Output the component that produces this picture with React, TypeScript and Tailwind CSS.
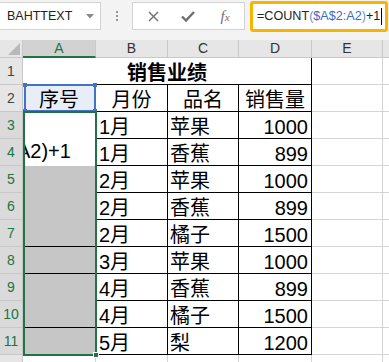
const DATA = [
  { m: "1月", p: "苹果", q: "1000" },
  { m: "1月", p: "香蕉", q: "899" },
  { m: "2月", p: "苹果", q: "1000" },
  { m: "2月", p: "香蕉", q: "899" },
  { m: "2月", p: "橘子", q: "1500" },
  { m: "3月", p: "苹果", q: "1000" },
  { m: "4月", p: "香蕉", q: "899" },
  { m: "4月", p: "橘子", q: "1500" },
  { m: "5月", p: "梨", q: "1200" },
];

// rows whose A cell has a black bottom line (A7, A8, A10)
const A_LINE = [7, 8, 10];

function RowHead({ n, sel }: { n: number; sel?: boolean }) {
  return (
    <div
      className={
        sel
          ? "flex items-center justify-center border-r border-b border-[#c8c8c8] bg-[#dadada] text-[14px] text-[#217346]"
          : "flex items-center justify-center border-r border-b border-[#c8c8c8] bg-[#e6e6e6] text-[14px] text-[#444]"
      }
    >
      {n}
    </div>
  );
}

function Toolbar() {
  return (
    <div className="flex h-[40px] items-start bg-[#f3f3f3] font-['Liberation_Sans',sans-serif]">
      {/* name box */}
      <div className="mt-[2px] flex h-[28px] w-[101px] items-center justify-between border-y border-r border-[#d4d4d4] bg-white pl-[7px] pr-[6px]">
        <span className="text-[12.5px] text-[#222]">BAHTTEXT</span>
        <svg width="8" height="5" viewBox="0 0 8 5">
          <path d="M0 0 H8 L4 4.5 Z" fill="#8a8a8a" />
        </svg>
      </div>
      {/* dots */}
      <div className="flex w-[31px] flex-col items-center gap-[2px] pt-[11px]">
        <div className="h-[2px] w-[2px] bg-[#9a9a9a]" />
        <div className="h-[2px] w-[2px] bg-[#9a9a9a]" />
        <div className="h-[2px] w-[2px] bg-[#9a9a9a]" />
      </div>
      {/* cancel / enter / fx */}
      <div className="mt-[2px] flex h-[28px] w-[113px] items-center border border-[#d4d4d4] bg-white">
        <div className="flex w-[37px] justify-center pl-[3px]">
          <svg width="11" height="11" viewBox="0 0 11 11">
            <path d="M1 1 L10 10 M10 1 L1 10" stroke="#6e6e6e" strokeWidth="1.4" />
          </svg>
        </div>
        <div className="flex w-[36px] justify-center">
          <svg width="14" height="11" viewBox="0 0 14 11">
            <path d="M1 5.5 L5 9.5 L13 1" stroke="#6e6e6e" strokeWidth="2.4" fill="none" />
          </svg>
        </div>
        <div className="flex w-[38px] justify-center">
          <span className="font-['Liberation_Serif',serif] text-[15px] italic text-[#6e6e6e]">
            f<span className="text-[11px]">x</span>
          </span>
        </div>
      </div>
      {/* formula box */}
      <div className="ml-[5px] mt-[1px] flex h-[31px] w-[138px] items-center rounded-[3px] border-[3px] border-[#f7b500] bg-white pl-[4px]">
        <span className="whitespace-nowrap text-[12.6px] text-[#222]">
          =COUNT<span className="text-[#6a93d4]">(</span>
          <span className="text-[#3a6cc6]">$A$2:A2</span>
          <span className="text-[#6a93d4]">)</span>+1
        </span>
        <div className="ml-[1px] h-[17px] w-[1px] bg-black" />
      </div>
    </div>
  );
}

export default function App() {
  return (
    <div className="relative h-[362px] w-[389px] overflow-hidden bg-white">
      <Toolbar />

      <div className="relative grid h-[322px] grid-cols-[23px_73px_72px_71px_73px_71px_1fr] grid-rows-[18px_repeat(11,27px)_1fr] font-['Liberation_Sans','Noto_Sans_CJK_SC',sans-serif]">
        {/* column headers */}
        <div className="relative border-r border-b border-[#c8c8c8] bg-[#e6e6e6]">
          <svg className="absolute bottom-[2px] right-[2px]" width="12" height="12" viewBox="0 0 12 12">
            <path d="M12 0 V12 H0 Z" fill="#b9b9b9" />
          </svg>
        </div>
        <div className="flex items-center justify-center border-r border-b-2 border-r-[#c8c8c8] border-b-[#217346] bg-[#d2d2d2] text-[14px] text-[#217346]">
          A
        </div>
        <div className="flex items-center justify-center border-r border-b border-[#c8c8c8] bg-[#e6e6e6] text-[14px] text-[#333]">
          B
        </div>
        <div className="flex items-center justify-center border-r border-b border-[#c8c8c8] bg-[#e6e6e6] text-[14px] text-[#333]">
          C
        </div>
        <div className="flex items-center justify-center border-r border-b border-[#c8c8c8] bg-[#e6e6e6] text-[14px] text-[#333]">
          D
        </div>
        <div className="flex items-center justify-center border-r border-b border-[#c8c8c8] bg-[#e6e6e6] text-[14px] text-[#333]">
          E
        </div>
        <div className="border-b border-[#c8c8c8] bg-[#e6e6e6]" />

        {/* row 1: title */}
        <RowHead n={1} />
        <div className="col-span-4 flex items-end justify-center border-r border-b border-black pb-[1px] text-[20px] font-bold leading-none text-black">
          销售业绩
        </div>
        <div className="border-r border-b border-[#d4d4d4]" />
        <div className="border-b border-[#d4d4d4]" />

        {/* row 2: header */}
        <RowHead n={2} />
        <div className="flex items-end justify-center border-r border-b border-black bg-[#e8eef8] pb-[1px] text-[20px] leading-none text-black">
          序号
        </div>
        <div className="flex items-end justify-center border-r border-b border-black pb-[1px] text-[20px] leading-none text-black">
          月份
        </div>
        <div className="flex items-end justify-center border-r border-b border-black pb-[1px] text-[20px] leading-none text-black">
          品名
        </div>
        <div className="flex items-end justify-center border-r border-b border-black pb-[1px] text-[20px] leading-none text-black">
          销售量
        </div>
        <div className="border-r border-b border-[#d4d4d4]" />
        <div className="border-b border-[#d4d4d4]" />

        {/* rows 3-11 */}
        {DATA.map((d, i) => {
          const r = i + 3;
          return [
            <RowHead key={`h${r}`} n={r} sel />,
            r === 3 ? (
              <div
                key={`a${r}`}
                className="row-span-2 flex items-end overflow-hidden bg-white pb-[5px] text-[20px] leading-none text-black"
              >
                <span className="ml-[-6px] whitespace-nowrap">A2)+1</span>
              </div>
            ) : r === 4 ? null : A_LINE.includes(r) ? (
              <div key={`a${r}`} className="border-b border-black bg-[#c6c6c6]" />
            ) : (
              <div key={`a${r}`} className="border-b border-[#c6c6c6] bg-[#c6c6c6]" />
            ),
            <div
              key={`b${r}`}
              className="flex items-end border-r border-b border-black pb-[1px] pl-[3px] text-[20px] leading-none text-black"
            >
              {d.m}
            </div>,
            <div
              key={`c${r}`}
              className="flex items-end border-r border-b border-black pb-[1px] pl-[2px] text-[20px] leading-none text-black"
            >
              {d.p}
            </div>,
            <div
              key={`d${r}`}
              className="flex items-end justify-end border-r border-b border-black pb-[1px] pr-[3px] text-[20px] leading-none text-black"
            >
              {d.q}
            </div>,
            <div key={`e${r}`} className="border-r border-b border-[#d4d4d4]" />,
            <div key={`f${r}`} className="border-b border-[#d4d4d4]" />,
          ];
        })}

        {/* row 12, cut off */}
        <div className="flex items-start justify-center border-r border-[#c8c8c8] bg-[#e6e6e6] pt-[4px] text-[14px] text-[#444]">
          12
        </div>
        <div className="border-r border-[#d4d4d4]" />
        <div className="border-r border-[#d4d4d4]" />
        <div className="border-r border-[#d4d4d4]" />
        <div className="border-r border-[#d4d4d4]" />
        <div className="border-r border-[#d4d4d4]" />
        <div />

        {/* formula reference range A2 */}
        <div className="pointer-events-none absolute left-[24px] top-[44px] h-[28px] w-[72px] border-2 border-[#4472c4]">
          <div className="absolute -left-[3px] -top-[3px] h-[4px] w-[4px] bg-[#4472c4]" />
          <div className="absolute -right-[3px] -top-[3px] h-[4px] w-[4px] bg-[#4472c4]" />
          <div className="absolute -bottom-[3px] -left-[3px] h-[4px] w-[4px] bg-[#4472c4]" />
          <div className="absolute -bottom-[3px] -right-[3px] h-[4px] w-[4px] bg-[#4472c4]" />
        </div>

        {/* selection A3:A11 */}
        <div className="pointer-events-none absolute left-[23px] top-[71px] h-[245px] w-[74px] border-2 border-[#217346]">
          <div className="absolute -bottom-[4px] -right-[4px] h-[6px] w-[6px] border border-white bg-[#217346]" />
        </div>
      </div>
    </div>
  );
}
